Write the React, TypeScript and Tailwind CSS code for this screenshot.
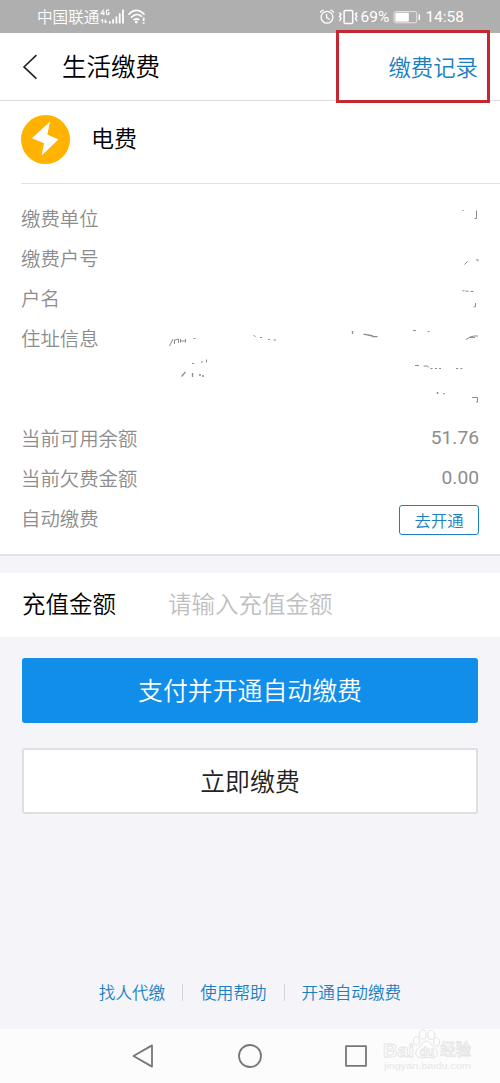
import type { ReactNode } from 'react'

const GREY = '#8c8c8c'

function StatusBar() {
  return (
    <div className="flex h-[33px] shrink-0 items-center bg-[#afafaf] pr-9 pl-[37px] text-white">
      <span className="text-[15.6px] leading-none">中国联通</span>
      <svg width="50" height="20" viewBox="0 0 50 20" className="shrink-0" fill="none" stroke="#fff">
        <path d="M4.6 2.5 L2.1 6.6 H5.5 M4.8 4.6 V8.2 M10 3.6 Q9.8 2.9 8.8 2.9 Q7.4 2.9 7.4 5.2 Q7.4 7.7 8.8 7.7 Q10.1 7.7 10.1 5.9 H9" strokeWidth="1.2" />
        <path d="M3.6 16 V12.4 M2 14 L3.6 12.2 M6.2 12.2 V16 M6.2 16 L7.8 14.2" strokeWidth="1.1" />
        <path d="M10.8 14.2 V16.4 M14.1 12.2 V16.4 M17.4 9.4 V16.4 M20.7 6.2 V16.4 M24 2.6 V16.4" strokeWidth="1.8" />
        <path d="M29.5 7.6 Q37.5 -0.8 45.5 7.6 M32 10.6 Q37.5 5 43 9.6 M34.5 13.2 Q37.5 10.6 40.4 13" strokeWidth="1.6" />
        <circle cx="37.3" cy="15" r="1.4" fill="#fff" stroke="none" />
        <path d="M44.7 10.5 V14 M44.7 15.2 V16.8" strokeWidth="1.7" />
      </svg>
      <svg width="42" height="20" viewBox="0 0 42 20" className="ml-auto shrink-0" fill="none" stroke="#fff">
        <circle cx="8" cy="10.3" r="5.9" strokeWidth="1.3" />
        <path d="M7.6 6.8 V10.6 L10.8 12.4" strokeWidth="1.2" />
        <path d="M1.2 5.6 Q2.2 3.6 4.6 2.9 M11.4 2.9 Q13.8 3.6 14.8 5.6" strokeWidth="1.4" />
        <rect x="25.1" y="3.4" width="8.6" height="13.2" rx="1" strokeWidth="1.5" />
        <path d="M20.4 5.6 L22 7.4 L20.6 9.4 L22 11.4 L20.4 14.2 M38 5.6 L36.4 7.4 L37.8 9.4 L36.4 11.4 L38 14.2" strokeWidth="1.5" />
      </svg>
      <span className="pt-[2px] font-[Roboto] text-[15.5px] leading-none font-normal">69%</span>
      <svg width="28" height="14" viewBox="0 0 28 14" className="ml-1 shrink-0" fill="none">
        <rect x="1.1" y="1.6" width="22.6" height="11.2" rx="1.6" stroke="#e4e4e4" />
        <rect x="2.4" y="2.8" width="13.4" height="8.8" fill="#fff" />
        <path d="M26.3 4.4 V10" stroke="#fff" strokeWidth="1.5" />
      </svg>
      <span className="ml-1 pt-[2px] font-[Roboto] text-[15.5px] leading-none font-normal">14:58</span>
    </div>
  )
}

function Header() {
  return (
    <header className="relative flex h-[68px] shrink-0 items-center border-b border-[#dcdcdc] bg-white pr-[22px] pl-[22px]">
      <svg width="16" height="26" viewBox="0 0 16 26" fill="none" stroke="#222" strokeWidth="1.6">
        <path d="M14.4 1.2 L2 12.9 L14.4 24.6" />
      </svg>
      <h1 className="ml-6 text-[24.5px] leading-none font-[350] text-black">生活缴费</h1>
      <a className="ml-auto text-[22.4px] leading-none text-[#1a80c2]">缴费记录</a>
      {/* Highlight frame around the history link */}
      <div className="absolute top-[-3px] right-[10px] h-[73px] w-[154px] border-[3px] border-[#c4272f]" />
    </header>
  )
}

function Row({ label, children }: { label: string; children?: ReactNode }) {
  return (
    <div className="flex h-10 items-center justify-between text-[19.4px] leading-none text-[#8c8c8c]">
      <span>{label}</span>
      {children}
    </div>
  )
}

// What is left of the erased account details
function ErasedDetails() {
  return (
    <svg
      className="absolute top-0 left-[150px]"
      width="350"
      height="236"
      viewBox="150 184 350 236"
      fill="none"
      stroke={GREY}
      strokeWidth="1"
    >
      <path d="M462 210.5 h2" opacity="0.6" />
      <path d="M474.5 218.5 h2 v-8" />
      <path d="M464.5 264.5 l3 -3 M476 259.8 h2 v1.5" />
      <path d="M462.5 290.8 h2 M465.5 291.2 h3 M470.5 291.5 h3 M475.5 303 v3.6 l-2 .4" />
      <path d="M169.5 346 l3.5 -7 M174.5 344 v-4 l4 -.8 v3.8 M180.5 342.5 v-3.5 M180.5 341 h5 M185.5 342.5 v-3.5" />
      <path d="M193.5 338.5 h2 M253.5 335 l2 2 M260 337.5 h2 M268 339.5 h2 M273.5 340 h2.5" />
      <path d="M352.5 331 v3 M363.5 334.2 l5 1 M368 335 l5 1 M372 336.6 h5.5" strokeWidth="1.3" />
      <path d="M413 330.5 h3 M427.5 331.5 h2 M466 339.5 l4 -2.5 l4 -1 h4 M470 337.5 h5" />
      <path d="M192 363.5 h2 M201 362.5 l2 -1 M206.5 359.5 v3" />
      <path d="M181.5 376.5 l4 -4.5 M192.5 373 v4 M199 375 h2 M202 376 h2" strokeWidth="1.3" />
      <path d="M415 365.5 h4 M423.5 366 h4 l1 1.5 M430.5 368.5 h2 M435 368.5 h2 M439 368.5 h2 M456 368.5 h2 M460.5 368.5 h2" />
      <path d="M436.5 393 h2 M437.5 392 v2 M443 393.8 h2 M472 397.5 h5.5 v4.5 h-1.5" />
    </svg>
  )
}

function Watermark() {
  return (
    <svg className="absolute top-0 right-0" width="130" height="54" viewBox="370 1029 130 54" overflow="visible">
      <g fill="#fdfdfd" stroke="#e4e4e4" strokeWidth="1">
        <ellipse cx="416.5" cy="1041" rx="3" ry="4.2" />
        <ellipse cx="422.8" cy="1034.5" rx="3.3" ry="4.6" />
        <ellipse cx="431.2" cy="1035" rx="3.3" ry="4.6" />
        <ellipse cx="436.5" cy="1042" rx="3" ry="4.2" />
        <path d="M426.5 1041 Q430 1041 432.5 1046 Q438 1050 437.5 1054 Q436.5 1059 427 1057.5 Q417 1059 415.5 1054 Q415 1050 420.5 1046 Q423.5 1041 426.5 1041 Z" />
      </g>
      <g fill="#fdfdfd" stroke="#e4e4e4" strokeWidth="0.8" fontWeight="700">
        <text x="383" y="1056.5" fontSize="18" fontFamily="Liberation Sans" textLength="31" lengthAdjust="spacingAndGlyphs">Bai</text>
        <text x="419.5" y="1055.5" fontSize="12" fontFamily="Liberation Sans">du</text>
        <text x="440" y="1055" fontSize="15.5" fontFamily="Noto Sans CJK SC" fontWeight="500">经验</text>
      </g>
      <text x="384" y="1069" fontSize="9.5" fontFamily="Liberation Sans" fontWeight="400" fill="#e6e6e6" textLength="87" lengthAdjust="spacingAndGlyphs">jingyan.baidu.com</text>
    </svg>
  )
}

export default function App() {
  return (
    <div className="flex h-[1083px] w-[500px] flex-col overflow-hidden bg-[#f4f4f9] font-['Noto_Sans_CJK_SC_DemiLight','Noto_Sans_CJK_SC',sans-serif] font-[350]">
      <StatusBar />
      <Header />

      {/* Bill */}
      <section className="h-[455px] shrink-0 border-b-2 border-[#e4e4e7] bg-white">
        <div className="ml-[21px] flex h-[83px] border-b border-[#e2e2e2] pt-[14px]">
          <svg width="49" height="49" viewBox="0 0 49 49">
            <circle cx="24.5" cy="24.5" r="24.5" fill="#ffb200" />
            <path d="M29 6.4 L11 23.2 L23 28.2 L20.6 40.6 L37.4 24.4 L26.4 19.6 Z" fill="#fff" />
          </svg>
          <h2 className="mt-[11px] ml-[21px] text-[23px] leading-none font-[350] text-black">电费</h2>
        </div>
        <div className="relative pt-[14px] pr-[21px] pl-[21px]">
          <ErasedDetails />
          <Row label="缴费单位" />
          <Row label="缴费户号" />
          <Row label="户名" />
          <Row label="住址信息" />
          <div className="mt-[60px]">
            <Row label="当前可用余额">
              <span className="font-[Roboto] text-[19.2px] font-normal">51.76</span>
            </Row>
            <Row label="当前欠费金额">
              <span className="font-[Roboto] text-[19.2px] font-normal">0.00</span>
            </Row>
            <Row label="自动缴费">
              <button className="mt-1 h-[30px] w-20 rounded-[3px] border-[1.5px] border-[#1a80c2] text-[16.4px] leading-none text-[#1a80c2]">
                去开通
              </button>
            </Row>
          </div>
        </div>
      </section>

      {/* Amount */}
      <section className="mt-[17px] flex h-16 shrink-0 items-center bg-white pb-[3px] pl-[22px] text-[23.5px] leading-none">
        <span className="w-[146px] text-black">充值金额</span>
        <span className="text-[#bfbfbf]">请输入充值金额</span>
      </section>

      <div className="mt-[21px] flex flex-col gap-[25px] px-[22px]">
        <button className="h-[65px] rounded-[3px] bg-[#108ee9] pb-[2px] text-[24.9px] leading-none text-white">
          支付并开通自动缴费
        </button>
        <button className="h-[66px] rounded-[3px] border-2 border-[#dfdfe2] bg-white pb-[2px] text-[24.9px] leading-none text-[#222]">
          立即缴费
        </button>
      </div>

      <footer className="mt-auto mb-[28px] flex shrink-0 items-center justify-center text-[16.6px] leading-none text-[#1a80c2]">
        <a>找人代缴</a>
        <i className="mx-[17px] h-[17px] w-px bg-[#d3d3d8]" />
        <a>使用帮助</a>
        <i className="mx-[17px] h-[17px] w-px bg-[#d3d3d8]" />
        <a>开通自动缴费</a>
      </footer>

      {/* System navigation */}
      <nav className="relative h-[54px] shrink-0 bg-[#fcfcfc]">
        <div className="flex h-full items-center pl-[131px]">
          <svg width="240" height="26" viewBox="0 0 240 26" fill="none" stroke="#777" strokeWidth="1.8" strokeLinejoin="round">
            <path d="M2.5 13 L21 2.4 V23.6 Z" />
            <circle cx="119" cy="13" r="11" />
            <rect x="215" y="3.2" width="20" height="19.6" />
          </svg>
        </div>
        <Watermark />
      </nav>
    </div>
  )
}
